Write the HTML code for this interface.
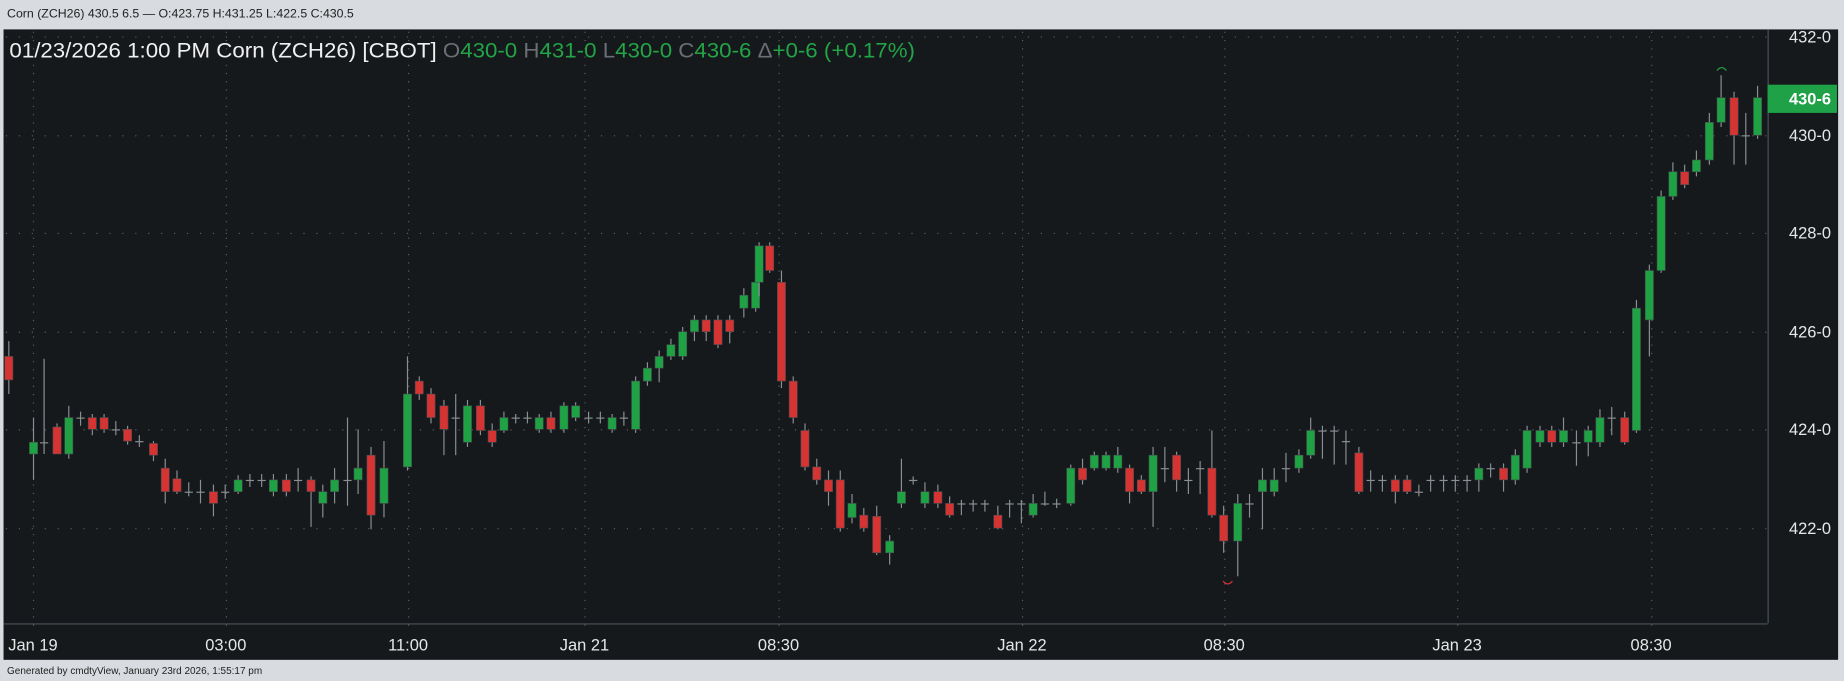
<!DOCTYPE html><html><head><meta charset="utf-8"><style>
html,body{margin:0;padding:0;background:#d8dce0;width:1844px;height:681px;overflow:hidden}
svg{display:block}
text{font-family:"Liberation Sans",sans-serif}
</style></head><body>
<svg id="s" width="1844" height="681" viewBox="0 0 1568 579" preserveAspectRatio="none" xmlns="http://www.w3.org/2000/svg">
<rect x="0" y="0" width="1568" height="579" fill="#d8dce0"/>
<text x="6" y="15" font-size="10.5" fill="#222">Corn (ZCH26) 430.5 6.5 — O:423.75 H:431.25 L:422.5 C:430.5</text>
<rect x="3" y="25" width="1560" height="536" fill="#15191c"/>
<g id="grid" stroke="#5a6066" stroke-width="1" stroke-dasharray="1 10"></g>
<g id="c"></g>
<line x1="1503.5" y1="25" x2="1503.5" y2="530" stroke="#4a5258"/>
<line x1="3" y1="530.5" x2="1503" y2="530.5" stroke="#4a5258"/>
<g font-size="14" fill="#e6e6e6" text-anchor="end">
<text x="1557" y="36">432-0</text><text x="1557" y="120">430-0</text><text x="1557" y="203">428-0</text>
<text x="1557" y="287">426-0</text><text x="1557" y="370">424-0</text><text x="1557" y="454">422-0</text>
</g>
<rect x="1503" y="72" width="59" height="24" fill="#1fa147"/>
<text x="1557" y="89" font-size="14" font-weight="bold" fill="#fff" text-anchor="end">430-6</text>
<g font-size="14" fill="#e6e6e6" text-anchor="middle">
<text x="28" y="553">Jan 19</text><text x="192" y="553">03:00</text><text x="347" y="553">11:00</text>
<text x="497" y="553">Jan 21</text><text x="662" y="553">08:30</text><text x="869" y="553">Jan 22</text>
<text x="1041" y="553">08:30</text><text x="1239" y="553">Jan 23</text><text x="1404" y="553">08:30</text>
</g>
<text x="8" y="49" font-size="18" fill="#f0f0f0" textLength="770" lengthAdjust="spacingAndGlyphs">01/23/2026  1:00 PM Corn (ZCH26) [CBOT] <tspan fill="#6a6f74">O</tspan><tspan fill="#22a447">430-0 </tspan><tspan fill="#6a6f74">H</tspan><tspan fill="#22a447">431-0 </tspan><tspan fill="#6a6f74">L</tspan><tspan fill="#22a447">430-0 </tspan><tspan fill="#6a6f74">C</tspan><tspan fill="#22a447">430-6 </tspan><tspan fill="#6a6f74">Δ</tspan><tspan fill="#22a447">+0-6 (+0.17%)</tspan></text>
<text x="6" y="573" font-size="8.5" fill="#222">Generated by cmdtyView, January 23rd 2026, 1:55:17 pm</text>
<path d="M1460 60 q4 -5 8 0" stroke="#22a447" fill="none"/>
<path d="M1040 494 q4 5 8 0" stroke="#d63333" fill="none"/>
</svg>
<script>
var ns="http://www.w3.org/2000/svg",g=document.getElementById('grid'),c=document.getElementById('c');
function el(p,t,a){var e=document.createElementNS(ns,t);for(var k in a)e.setAttribute(k,a[k]);p.appendChild(e);return e}
[31,115,198,282,365,449].forEach(function(y){el(g,'line',{x1:5,y1:y+.5,x2:1503,y2:y+.5})});
[28,192,347,497,662,869,1041,1239,1404].forEach(function(x){el(g,'line',{x1:x+.5,y1:27,x2:x+.5,y2:535,'stroke-dasharray':'1 6'})});
var d=[[7,303,323,'r',290,335],[28,376,386,'g',355,408],[37,376,376,'d',305,386],[48,363,386,'r',360,386],[58,355,386,'g',345,390],[68,355,355,'d',350,362],[78,355,365,'r',352,370],[88,355,365,'r',352,368],[98,365,365,'d',358,370],[108,365,375,'r',362,378],[118,375,375,'d',370,380],[130,377,387,'r',375,392],[140,398,418,'r',390,428],[150,407,418,'r',400,420],[160,418,418,'d',410,422],[170,418,418,'d',408,428],[181,418,428,'r',412,439],[191,418,418,'d',412,424],[202,408,418,'g',404,420],[212,408,408,'d',403,414],[222,408,408,'d',403,414],[232,408,418,'g',403,422],[243,408,418,'r',403,422],[253,408,408,'d',398,418],[264,408,418,'r',405,448],[274,418,428,'g',412,440],[284,408,418,'g',398,428],[295,408,408,'d',355,430],[304,398,408,'g',365,420],[315,387,438,'r',380,450],[326,398,428,'g',375,440],[346,335,397,'g',303,400],[356,324,335,'r',320,340],[366,335,355,'r',330,360],[377,345,365,'r',340,387],[387,355,355,'d',335,387],[397,345,376,'g',340,380],[408,345,366,'r',340,370],[418,366,376,'r',360,380],[428,355,366,'g',350,368],[438,355,355,'d',352,360],[448,355,355,'d',350,360],[458,355,365,'g',352,368],[468,355,365,'r',350,368],[479,345,365,'g',342,368],[489,345,355,'g',342,358],[500,355,355,'d',350,360],[510,355,355,'d',350,360],[520,355,365,'g',352,368],[530,355,355,'d',350,362],[540,324,365,'g',320,368],[550,313,324,'g',308,328],[560,303,313,'g',298,325],[570,293,303,'g',288,306],[580,282,303,'g',278,306],[590,272,282,'g',268,290],[600,272,282,'r',268,290],[610,272,293,'r',268,296],[620,272,282,'r',268,292],[632,251,262,'g',245,270],[642,240,262,'g',236,265],[645,209,240,'g',206,252],[654,209,230,'r',206,232],[664,240,324,'r',230,330],[674,324,355,'r',320,360],[684,366,397,'r',360,400],[694,397,408,'r',390,412],[704,408,418,'r',400,430],[714,408,449,'r',400,452],[724,428,440,'g',420,445],[734,438,449,'r',432,452],[745,439,470,'r',430,472],[756,460,470,'g',455,480],[766,418,428,'g',390,432],[776,408,408,'d',405,412],[786,418,428,'g',410,432],[797,418,428,'r',412,432],[807,428,438,'r',422,440],[817,428,428,'d',425,438],[827,428,428,'d',425,435],[837,428,428,'d',425,435],[848,438,449,'r',430,450],[858,428,428,'d',425,440],[868,428,428,'d',425,445],[878,428,438,'g',420,440],[888,428,428,'d',418,430],[898,428,428,'d',424,432],[910,398,428,'g',395,430],[920,398,408,'r',390,412],[930,387,398,'g',384,400],[940,387,398,'g',384,400],[950,387,398,'g',380,402],[960,398,418,'r',395,428],[970,408,418,'r',404,420],[980,387,418,'g',380,448],[990,398,398,'d',380,410],[1000,387,408,'r',384,418],[1010,408,408,'d',398,420],[1020,398,398,'d',392,420],[1030,398,438,'r',366,440],[1040,438,460,'r',430,470],[1052,428,460,'g',420,490],[1062,428,428,'d',420,440],[1073,408,418,'g',398,450],[1083,408,418,'g',398,422],[1093,398,398,'d',385,410],[1104,387,398,'g',382,402],[1114,366,387,'g',355,390],[1124,366,366,'d',362,390],[1134,366,366,'d',362,395],[1144,375,375,'d',366,395],[1155,385,418,'r',380,420],[1165,408,408,'d',400,418],[1175,408,408,'d',404,418],[1186,408,418,'r',404,428],[1196,408,418,'r',404,420],[1206,418,418,'d',412,422],[1216,408,408,'d',404,418],[1227,408,408,'d',404,418],[1237,408,408,'d',404,418],[1247,408,408,'d',404,418],[1257,398,408,'g',394,418],[1267,398,398,'d',394,406],[1278,398,408,'r',394,418],[1288,387,408,'g',382,412],[1298,366,398,'g',362,402],[1309,366,376,'g',362,380],[1319,366,376,'r',362,380],[1329,366,376,'g',355,380],[1340,376,376,'d',366,396],[1350,366,376,'g',362,388],[1360,355,376,'g',348,380],[1370,355,355,'d',346,370],[1381,355,376,'r',350,378],[1391,262,366,'g',255,368],[1402,230,272,'g',225,303],[1412,167,230,'g',162,232],[1422,146,167,'g',138,170],[1432,146,157,'r',140,160],[1442,136,146,'g',128,150],[1453,104,136,'g',96,140],[1463,83,104,'g',64,108],[1474,83,115,'r',78,140],[1484,115,115,'d',96,140],[1494,83,115,'g',73,118]];
var col={g:'#1fa244',r:'#d63333'};
d.forEach(function(a){
 el(c,'line',{x1:a[0]+.5,y1:a[4],x2:a[0]+.5,y2:a[5],stroke:'#8a8f93','stroke-width':1});
 if(a[3]=='d'){el(c,'line',{x1:a[0]-3,y1:a[1]+.5,x2:a[0]+4,y2:a[1]+.5,stroke:'#8a8f93'});}
 else el(c,'rect',{x:a[0]-3,y:a[1],width:7,height:Math.max(a[2]-a[1],2),fill:col[a[3]],stroke:'#444a4e','stroke-width':.5});
});
</script>
</body></html>
